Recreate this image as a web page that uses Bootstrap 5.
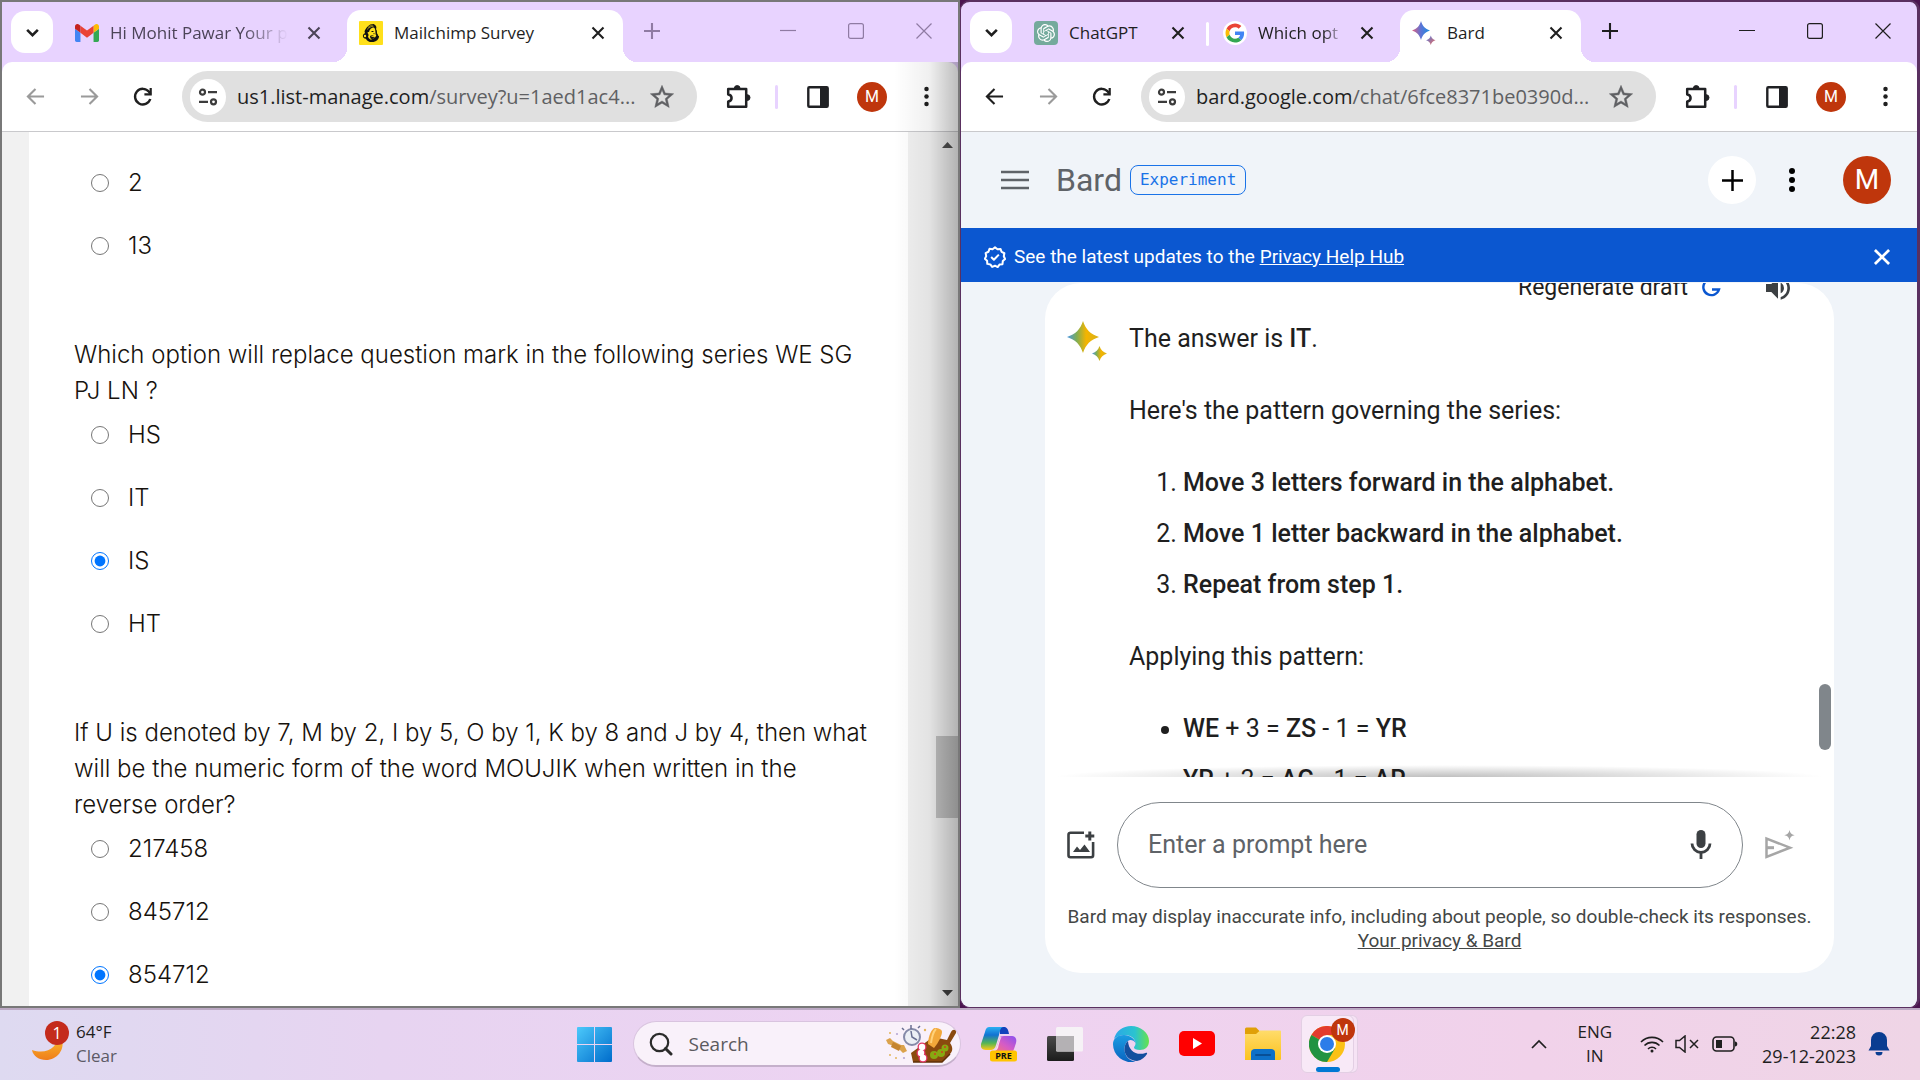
<!DOCTYPE html>
<html lang="en">
<head>
<meta charset="utf-8">
<meta name="viewport" content="width=device-width, initial-scale=1">
<title>Desktop</title>
<link href="https://cdn.jsdelivr.net/npm/bootstrap@5.3.0/dist/css/bootstrap.min.css" rel="stylesheet">
<script src="https://cdn.jsdelivr.net/npm/bootstrap@5.3.0/dist/js/bootstrap.bundle.min.js" defer></script>
<style>
  :root { --ui: "Open Sans", "Noto Sans", sans-serif; --gs: Roboto, "Open Sans", sans-serif; --survey: Inter, Roboto, sans-serif; }
  body { background: #4b1450; font-family: var(--ui); color: #1f1f1f; overflow: hidden; }
  button { color: inherit; }
  svg { display: block; flex: none; }
  .plain { border: 0; background: none; padding: 0; display: flex; align-items: center; justify-content: center; flex: none; }
  .desk { min-height: 0; }

  /* browser windows */
  .win { background: #e8d3ff; min-width: 0; flex: 1 1 0; overflow: hidden; }
  .win-left { border: 2px solid #787878; }
  .win-right { border: 1px solid #5a3060; border-top-width: 2px; border-right-width: 3px; border-radius: 10px; }
  .win-shade::after { content: ""; position: absolute; top: 60px; right: 0; bottom: 0; width: 64px; pointer-events: none; background: linear-gradient(90deg, transparent, rgba(0,0,0,.06) 55%, rgba(0,0,0,.26)); }
  .strip { height: 60px; padding-left: 9px; gap: 8px; flex: none; }
  .tabs-menu { width: 42px; height: 42px; border-radius: 14px; background: #fff; margin: 9px 2px 0 0; }
  .tab { height: 52px; margin-top: 8px; padding: 0 14px 6px 12px; border-radius: 14px 14px 0 0; font-size: 17px; position: relative; gap: 11px; flex: none; }
  .tab-wide { width: 276px; }
  .tab-slim { width: 181px; }
  .tab-on { background: #fff; }
  .tab-on::before, .tab-on::after { content: ""; position: absolute; bottom: 0; width: 14px; height: 14px; }
  .tab-on::before { left: -14px; background: radial-gradient(circle at 0 0, transparent 14px, #fff 14px); }
  .tab-on::after { right: -14px; background: radial-gradient(circle at 100% 0, transparent 14px, #fff 14px); }
  .tab-title { flex: 1 1 0; min-width: 0; overflow: hidden; white-space: nowrap; }
  .tab-fade { -webkit-mask-image: linear-gradient(90deg, #000 75%, transparent); mask-image: linear-gradient(90deg, #000 75%, transparent); }
  .tab-close { width: 22px; }
  .tab-muted { color: #4c4458; }
  .tab-line { width: 3px; height: 24px; background: #fff; border-radius: 2px; margin: 20px -6px 0 -5px; }
  .tab-new { width: 36px; height: 58px; margin-left: 3px; }
  .ctl { gap: 32px; padding-right: 16px; height: 58px; }
  .ctl .plain { width: 36px; height: 58px; }
  .dimmed { color: #8f7ba3; }
  .tools { height: 69px; flex: none; background: #fff; border-radius: 10px 10px 0 0; padding: 0 14px 0 15px; }
  .rnd { width: 36px; height: 36px; }
  .rnd-next { margin-left: 18px; }
  .off { color: #9a9a9a; }
  .omni { height: 51px; border-radius: 26px; background: #e0e0e0; padding: 0 17px 0 8px; min-width: 0; margin: 0 23px 0 21px; }
  .site { width: 36px; height: 36px; border-radius: 50%; background: #fff; }
  .url { font-size: 20px; color: #5f6063; overflow: hidden; white-space: nowrap; padding-left: 11px; flex: 1 1 0; min-width: 0; }
  .url b { font-weight: 400; color: #1f1f1f; }
  .tool-line { width: 3px; height: 24px; background: #e8d3ff; border-radius: 2px; margin: 0 22px 0 19px; }
  .who { width: 30px; height: 30px; border-radius: 50%; background: #bf360c; color: #fff; font: 16px/30px var(--gs); margin: 0 21px; }
  .page { border-top: 1px solid #c9c9cc; min-height: 0; }

  /* survey */
  .survey-bg { background: #f1f1f1; padding-left: 27px; }
  .sheet { background: #fff; padding: 33px 32px 0 45px; min-height: 0; overflow: hidden; font: 300 24px/36px var(--survey); color: #17120d; }
  .sheet fieldset { margin-bottom: 73px; }
  .sheet legend { font-size: 24px; line-height: 36px; margin: 0 0 8px; float: none; }
  .opt { display: flex; align-items: center; gap: 19px; padding-left: 17px; height: 36px; margin-bottom: 27px; }
  .opt:last-child { margin-bottom: 0; }
  .opt input { width: 18px; height: 18px; margin: 0; }
  .bar { width: 22px; margin-left: 28px; padding: 8px 0; flex: none; }
  .bar-thumb { height: 82px; width: 22px; background: #c1c1c1; }
  .sp-a { flex: 586 1 0; } .sp-b { flex: 170 1 0; }

  /* Bard */
  .bard { background: #f0f4f9; font-family: var(--gs); }
  .bard-head { height: 96px; flex: none; padding: 0 26px 0 40px; }
  .bard-name { font: 32px/40px var(--gs); color: #5f6368; margin: 0 8px 0 27px; }
  .exp { font: 16px/28px "DejaVu Sans Mono", monospace; color: #1a73e8; border: 1px solid #1a73e8; border-radius: 8px; padding: 0 9px; }
  .disc { width: 48px; height: 48px; border-radius: 50%; }
  .disc-m { background: #bf360c; color: #fff; font-size: 28px; }
  .more { margin: 0 33px 0 18px; }
  .notice { height: 54px; flex: none; background: #0b57d0; color: #fff; font-size: 19px; padding: 4px 17px 0 23px; }
  .notice a { color: #fff; }
  .chat-card { background: #fff; border-radius: 36px; margin: 1px 83px 34px 84px; min-height: 0; overflow: hidden; position: relative; }
  .log { overflow: hidden; min-height: 0; padding: 0 22px; font-size: 25px; line-height: 36px; }
  .regen { margin: -10px 18px 18px 0; height: 30px; font-size: 23px; line-height: 30px; color: #1f1f1f; }
  .regen-icon { margin: 0 41px 0 13px; }
  .log-mark { margin-right: 22px; }
  .log p { margin-bottom: 36px; }
  .log ol, .log ul { padding-left: 54px; margin-bottom: 36px; }
  .log li { margin-bottom: 15px; }
  .log b { font-weight: 500; }
  .log-thumb { position: absolute; right: 3px; top: 401px; width: 12px; height: 66px; border-radius: 6px; background: #80868b; }
  .log-edge { height: 12px; flex: none; margin: -12px 10px 0; position: relative; background: radial-gradient(ellipse 50% 100% at 50% 100%, rgba(0,0,0,.25), transparent); }
  .ask { padding: 25px 37px 0 22px; flex: none; }
  .ask-pill { height: 86px; border: 1px solid #80868b; border-radius: 43px; margin: 0 20px 0 22px; padding: 0 27px 0 30px; }
  .ask-pill input { border: 0; outline: 0; background: none; min-width: 0; font: 25px/36px var(--gs); padding: 0; }
  .ask-pill input::placeholder { color: #5f6368; opacity: 1; }
  .fine { font-size: 19px; line-height: 24px; color: #444746; text-align: center; padding: 17px 0 20px; flex: none; }
  .fine a { color: #444746; }

  /* taskbar */
  .taskbar { display: grid; grid-template-columns: 1fr auto 1fr; height: 72px; flex: none; border-top: 2px solid #bca9c4; padding: 0 22px 2px 30px; background: linear-gradient(90deg, #dedaf1, #e7d4f1 20%, #eed3f2 50%, #f1d2ea 80%, #efd5e6); font-size: 17px; line-height: 24px; }
  .count { position: absolute; left: 15px; top: -6px; width: 24px; height: 24px; border-radius: 50%; background: #c42b1c; color: #fff; font-size: 16px; text-align: center; }
  .sky { color: #5c5a66; }
  .dock { margin-left: 2px; }
  .finder { width: 328px; height: 46px; border-radius: 23px; background: #f9f1fa; border: 1px solid #d9c4df; border-bottom: 2px solid #c5b0cb; padding: 0 3px 0 15px; margin: 0 20px 0 21px; }
  .finder input { border: 0; outline: 0; background: none; min-width: 0; font: 19px/28px var(--ui); padding: 0 0 0 16px; }
  .finder input::placeholder { color: #5c5a5e; opacity: 1; }
  .apps { gap: 30px; }
  .app-on { width: 53px; height: 58px; border-radius: 6px; background: #f8e9f7; border: 1px solid #e3cfe4; margin-left: -10px; position: relative; box-shadow: 4px 0 0 -1px #f6e3f5, 4px 0 0 0 #e3cfe4; }
  .app-on::after { content: ""; position: absolute; left: 14px; bottom: 0; width: 24px; height: 5px; border-radius: 3px; background: #0078d4; }
  .app-who { position: absolute; left: 29px; top: 2px; width: 24px; height: 24px; border-radius: 50%; background: #bf360c; color: #fff; font: 14px/24px var(--gs); text-align: center; }
  .tray { padding-right: 8px; }
  .lang { margin: 0 28px 0 30px; }
  .clock { margin: 0 12px 0 24px; font-size: 18px; }
</style>
</head>
<body class="vh-100 d-flex flex-column">

<svg width="0" height="0" class="position-absolute" aria-hidden="true">
  <defs>
    <linearGradient id="gBard" x1="0" y1="0" x2="1" y2="0"><stop offset="0" stop-color="#e0607e"/><stop offset=".5" stop-color="#5b74d6"/><stop offset="1" stop-color="#1c8ee0"/></linearGradient>
    <linearGradient id="gBard2" x1="0" y1="0" x2="1" y2="1"><stop offset="0" stop-color="#4f7be0"/><stop offset="1" stop-color="#ee6a5c"/></linearGradient>
    <linearGradient id="gAns" x1="0" y1="0" x2="1" y2="0"><stop offset="0" stop-color="#4a97e8"/><stop offset=".3" stop-color="#7fae55"/><stop offset=".6" stop-color="#f4b400"/><stop offset="1" stop-color="#d8b21c"/></linearGradient>
    <linearGradient id="gWin" x1="0" y1="0" x2="1" y2="1"><stop offset="0" stop-color="#4cc9fb"/><stop offset="1" stop-color="#006ccb"/></linearGradient>
    <linearGradient id="gCopA" x1="0" y1="0" x2="0" y2="1"><stop offset="0" stop-color="#2bb0f2"/><stop offset=".35" stop-color="#1272d2"/><stop offset=".7" stop-color="#55b556"/><stop offset="1" stop-color="#ffc817"/></linearGradient>
    <linearGradient id="gCopB" x1="1" y1="0" x2="0" y2="1"><stop offset="0" stop-color="#8850f0"/><stop offset=".5" stop-color="#d65cc5"/><stop offset="1" stop-color="#ff7b63"/></linearGradient>
    <linearGradient id="gEdgeA" x1="0" y1="0" x2="1" y2="0"><stop offset="0" stop-color="#2aa7e8"/><stop offset=".6" stop-color="#2bc3d0"/><stop offset="1" stop-color="#66e34c"/></linearGradient>
    <linearGradient id="gEdgeB" x1="0" y1="0" x2="0" y2="1"><stop offset="0" stop-color="#1b9de2"/><stop offset="1" stop-color="#0a64c0"/></linearGradient>
    <linearGradient id="gFold" x1="0" y1="0" x2="0" y2="1"><stop offset="0" stop-color="#ffdc6b"/><stop offset="1" stop-color="#fcc21e"/></linearGradient>
    <linearGradient id="gMoon" x1="0" y1="0" x2="0" y2="1"><stop offset="0" stop-color="#fbc02d"/><stop offset="1" stop-color="#ef7d1b"/></linearGradient>
    <linearGradient id="gDark" x1="0" y1="0" x2="0" y2="1"><stop offset="0" stop-color="#4a4a4a"/><stop offset="1" stop-color="#1c1c1c"/></linearGradient>
  </defs>
  <symbol id="i-down" viewBox="0 0 14 14"><path d="M2 4.500l5 5 5-5" fill="none" stroke="currentColor" stroke-width="2.400"/></symbol>
  <symbol id="i-x" viewBox="0 0 14 14"><path d="M1.500 1.500l11 11m0-11l-11 11" fill="none" stroke="currentColor" stroke-width="2.100"/></symbol>
  <symbol id="i-thinx" viewBox="0 0 16 16"><path d="M.5.5l15 15m0-15l-15 15" fill="none" stroke="currentColor" stroke-width="1.200"/></symbol>
  <symbol id="i-plus" viewBox="0 0 16 16"><path d="M8 0v16M0 8h16" fill="none" stroke="currentColor" stroke-width="2.100"/></symbol>
  <symbol id="i-min" viewBox="0 0 16 16"><path d="M0 7.500h16" stroke="currentColor" stroke-width="1.200"/></symbol>
  <symbol id="i-max" viewBox="0 0 16 16"><rect x=".6" y=".6" width="14.800" height="14.800" rx="2" fill="none" stroke="currentColor" stroke-width="1.200"/></symbol>
  <symbol id="i-back" viewBox="0 0 20 20"><path d="M10 2l-8 8 8 8M2 10h17" fill="none" stroke="currentColor" stroke-width="2.200"/></symbol>
  <symbol id="i-fwd" viewBox="0 0 20 20"><path d="M10 2l8 8-8 8M18 10H1" fill="none" stroke="currentColor" stroke-width="2.200"/></symbol>
  <symbol id="i-reload" viewBox="0 0 20 20"><path d="M17.300 12A7.800 7.800 0 1 1 16 4.800L17.500 7" fill="none" stroke="currentColor" stroke-width="2.400"/><path d="M18.800 1v7.400h-7.400V6.200h5.200V1z" fill="currentColor"/></symbol>
  <symbol id="i-tune" viewBox="0 0 20 18"><g fill="none" stroke="#3c3c3c" stroke-width="2.200"><circle cx="4.500" cy="4.200" r="2.500"/><circle cx="15.500" cy="13.800" r="2.500"/><path d="M10 4.200h9M1 13.800h9"/></g></symbol>
  <symbol id="i-star" viewBox="0 0 24 24"><path d="M22 9.240l-7.190-.62L12 2 9.190 8.630 2 9.240l5.460 4.730L5.820 21 12 17.270 18.180 21l-1.630-7.030L22 9.240zM12 15.400l-3.760 2.270 1-4.280-3.320-2.880 4.380-.38L12 6.100l1.710 4.040 4.380.38-3.320 2.880 1 4.280L12 15.400z" fill="#5f6063" stroke="#5f6063" stroke-width=".4"/></symbol>
  <symbol id="i-ext" viewBox="0 0 26 26"><path d="M3.200 5h18v17.800h-18v-5.300c4.500-.6 4.500-6.400 0-7z" fill="none" stroke="#202124" stroke-width="2.500" stroke-linejoin="round"/><path d="M9.300 4.500a2.900 2.900 0 0 1 5.800 0zM21.500 10.700h.6a2.900 2.900 0 0 1 0 5.800h-.6z" fill="#202124" stroke="#202124"/></symbol>
  <symbol id="i-side" viewBox="0 0 22 22"><rect x="1.300" y="1.300" width="19.400" height="19.400" rx="1" fill="none" stroke="#202124" stroke-width="2.400"/><path d="M13 1h8v20h-8z" fill="#202124"/></symbol>
  <symbol id="i-dots" viewBox="0 0 6 24"><g fill="currentColor"><circle cx="3" cy="3" r="2.700"/><circle cx="3" cy="12" r="2.700"/><circle cx="3" cy="21" r="2.700"/></g></symbol>
  <symbol id="i-spark" viewBox="0 0 24 24"><path d="M9 0c1.400 5 4 7.800 9 9.500-5 1.700-7.600 4.500-9 9.500-1.400-5-4-7.800-9-9.500C5 7.800 7.600 5 9 0z" fill="url(#gBard)"/><path d="M18.800 14.500c.8 2.700 2 4 4.700 4.700-2.700.8-4 2-4.700 4.800-.8-2.700-2-4-4.700-4.800 2.700-.7 4-2 4.700-4.700z" fill="url(#gBard2)"/></symbol>
</svg>

<main class="desk d-flex flex-grow-1">
  <!-- Survey window -->
  <section class="win win-left win-shade position-relative d-flex flex-column">
    <div class="strip d-flex align-items-start">
      <button class="plain tabs-menu" aria-label="Search tabs"><svg width="15" height="15"><use href="#i-down"/></svg></button>
      <div class="tab tab-wide tab-muted d-flex align-items-center">
        <svg width="24" height="18" viewBox="52 42 88 66"><path fill="#4285f4" d="M58 108h14V74L52 59v43c0 3.320 2.690 6 6 6"/><path fill="#34a853" d="M120 108h14c3.320 0 6-2.690 6-6V59l-20 15"/><path fill="#fbbc04" d="M120 48v26l20-15v-8c0-7.420-8.470-11.650-14.400-7.200"/><path fill="#ea4335" d="M72 74V48l24 18 24-18v26L96 92"/><path fill="#c5221f" d="M52 51v8l20 15V48l-5.600-4.200c-5.940-4.450-14.400-.22-14.400 7.200"/></svg>
        <span class="tab-title tab-fade me-1">Hi Mohit Pawar Your p</span>
        <button class="plain tab-close" aria-label="Close tab"><svg width="14" height="14"><use href="#i-x"/></svg></button>
      </div>
      <div class="tab tab-wide tab-on d-flex align-items-center">
        <svg width="24" height="24" viewBox="0 0 24 24"><rect width="24" height="24" rx="1" fill="#ffe01b"/><path d="M14.500 3c-3-.8-7.500 3.200-8.800 6.800-.5 1.300.6 2 .2 2.500-1.400.5-2.200 1.500-2 3 .2 1.700 1.700 2.600 3 2.400 1.200 2.800 4.500 3.800 7.600 3.200 3-.5 5-2.600 5.500-5 .2-.9-.5-1.300-1-1.400 0-.7-.3-1.800-1-2 .1-2.700-.4-3.700-1-4.200 1-2 .2-4.500-2.500-5.300z" fill="#111"/><path d="M10 11c.5-2.500 2.500-4.500 4.800-4.500 1.400.8 1.600 3 1.700 5.500 0 1.300.2 2 .8 2.400-1 2.800-3.400 3.400-5.300 2.700 1.800.3 3.600-.2 4.400-1.300-1.600.5-4.200.5-4.400-1.300 1 .8 2 .8 3 .5-1.500-1-3.200-1.200-4 .5.3 2.300 1.500 3.200 2.800 3.500-2.600 0-4.300-1.500-4.800-3.500.8-1 .7-2.500-.5-3.500 0-.6.700-.9 1.500-1z" fill="#ffe01b"/><path d="M9 6.500c1.500-1.400 3-2.300 4.800-2.400M8 8.500c2-2 4-3.200 6.500-3.300" stroke="#ffe01b" stroke-width=".6" fill="none"/><path d="M12.500 10.500h2m.5 1.700v1" stroke="#111" stroke-width="1"/><circle cx="6" cy="15" r="1.200" fill="#ffe01b"/></svg>
        <span class="tab-title">Mailchimp Survey</span>
        <button class="plain tab-close" aria-label="Close tab"><svg width="14" height="14"><use href="#i-x"/></svg></button>
      </div>
      <button class="plain tab-new dimmed" aria-label="New tab"><svg width="16" height="16"><use href="#i-plus"/></svg></button>
      <div class="ctl d-flex ms-auto dimmed">
        <button class="plain" aria-label="Minimise"><svg width="16" height="16"><use href="#i-min"/></svg></button>
        <button class="plain" aria-label="Maximise"><svg width="16" height="16"><use href="#i-max"/></svg></button>
        <button class="plain" aria-label="Close"><svg width="16" height="16"><use href="#i-thinx"/></svg></button>
      </div>
    </div>
    <div class="tools d-flex align-items-center">
      <button class="plain rnd off" aria-label="Back"><svg width="19" height="19"><use href="#i-back"/></svg></button>
      <button class="plain rnd rnd-next off" aria-label="Forward"><svg width="19" height="19"><use href="#i-fwd"/></svg></button>
      <button class="plain rnd rnd-next" aria-label="Reload"><svg width="20" height="20"><use href="#i-reload"/></svg></button>
      <div class="omni d-flex align-items-center flex-grow-1">
        <span class="plain site"><svg width="20" height="18"><use href="#i-tune"/></svg></span>
        <span class="url"><b>us1.list-manage.com</b>/survey?u=1aed1ac4...</span>
        <button class="plain rnd" aria-label="Bookmark"><svg width="28" height="28"><use href="#i-star"/></svg></button>
      </div>
      <button class="plain rnd" aria-label="Extensions"><svg width="26" height="26"><use href="#i-ext"/></svg></button>
      <span class="tool-line"></span>
      <button class="plain rnd" aria-label="Side panel"><svg width="22" height="22"><use href="#i-side"/></svg></button>
      <button class="plain who" aria-label="Profile">M</button>
      <button class="plain rnd" aria-label="Menu"><svg width="5" height="21"><use href="#i-dots"/></svg></button>
    </div>
    <div class="page survey-bg d-flex flex-grow-1">
      <form class="sheet flex-grow-1">
        <fieldset>
          <label class="opt"><input type="radio" name="q1">2</label>
          <label class="opt"><input type="radio" name="q1">13</label>
        </fieldset>
        <fieldset>
          <legend>Which option will replace question mark in the following series WE SG PJ LN ?</legend>
          <label class="opt"><input type="radio" name="q2">HS</label>
          <label class="opt"><input type="radio" name="q2">IT</label>
          <label class="opt"><input type="radio" name="q2" checked>IS</label>
          <label class="opt"><input type="radio" name="q2">HT</label>
        </fieldset>
        <fieldset>
          <legend>If U is denoted by 7, M by 2, I by 5, O by 1, K by 8 and J by 4, then what will be the numeric form of the word MOUJIK when written in the reverse order?</legend>
          <label class="opt"><input type="radio" name="q3">217458</label>
          <label class="opt"><input type="radio" name="q3">845712</label>
          <label class="opt"><input type="radio" name="q3" checked>854712</label>
        </fieldset>
      </form>
      <div class="bar d-flex flex-column align-items-center">
        <svg width="11" height="10" viewBox="0 0 11 10"><path d="M5.500 2L11 8H0z" fill="#505050"/></svg>
        <span class="sp-a"></span><span class="bar-thumb"></span><span class="sp-b"></span>
        <svg width="11" height="10" viewBox="0 0 11 10"><path d="M5.500 8L11 2H0z" fill="#404040"/></svg>
      </div>
    </div>
  </section>

  <!-- Bard window -->
  <section class="win win-right d-flex flex-column">
    <div class="strip d-flex align-items-start">
      <button class="plain tabs-menu" aria-label="Search tabs"><svg width="15" height="15"><use href="#i-down"/></svg></button>
      <div class="tab tab-slim d-flex align-items-center">
        <svg width="24" height="24" viewBox="0 0 24 24"><rect width="24" height="24" rx="4" fill="#74aa9c"/><path transform="translate(3 3) scale(.75)" fill="#fff" d="M22.282 9.821a5.985 5.985 0 0 0-.516-4.910 6.046 6.046 0 0 0-6.510-2.900A6.065 6.065 0 0 0 4.981 4.182a5.985 5.985 0 0 0-3.998 2.900 6.046 6.046 0 0 0 .743 7.097 5.980 5.980 0 0 0 .511 4.911 6.051 6.051 0 0 0 6.515 2.900A5.985 5.985 0 0 0 13.260 24a6.056 6.056 0 0 0 5.772-4.206 5.989 5.989 0 0 0 3.998-2.900 6.056 6.056 0 0 0-.748-7.073zm-9.022 12.608a4.476 4.476 0 0 1-2.876-1.041l.142-.08 4.778-2.758a.795.795 0 0 0 .393-.681v-6.737l2.020 1.169a.071.071 0 0 1 .038.052v5.583a4.504 4.504 0 0 1-4.495 4.494zm-9.661-4.125a4.471 4.471 0 0 1-.535-3.014l.142.085 4.783 2.758a.771.771 0 0 0 .781 0l5.843-3.369v2.332a.08.08 0 0 1-.033.062L9.740 19.950a4.499 4.499 0 0 1-6.141-1.646zM2.341 7.896a4.485 4.485 0 0 1 2.366-1.973V11.600a.766.766 0 0 0 .388.677l5.814 3.354-2.020 1.169a.076.076 0 0 1-.071 0l-4.830-2.787A4.504 4.504 0 0 1 2.341 7.872zm16.596 3.856L13.104 8.364 15.119 7.200a.076.076 0 0 1 .071 0l4.830 2.791a4.494 4.494 0 0 1-.677 8.104v-5.677a.79.79 0 0 0-.406-.666zm2.011-3.023l-.142-.085-4.774-2.782a.776.776 0 0 0-.785 0L9.409 9.230V6.897a.066.066 0 0 1 .028-.061l4.830-2.787a4.499 4.499 0 0 1 6.680 4.660zM8.307 12.863l-2.020-1.164a.08.08 0 0 1-.038-.057V6.074a4.499 4.499 0 0 1 7.376-3.454l-.142.081L8.704 5.459a.795.795 0 0 0-.393.681zm1.098-2.365l2.602-1.500 2.607 1.500v2.999l-2.597 1.500-2.607-1.500z"/></svg>
        <span class="tab-title">ChatGPT</span>
        <button class="plain tab-close" aria-label="Close tab"><svg width="14" height="14"><use href="#i-x"/></svg></button>
      </div>
      <span class="tab-line"></span>
      <div class="tab tab-slim d-flex align-items-center">
        <svg width="24" height="24" viewBox="0 0 24 24"><circle cx="12" cy="12" r="12" fill="#fff"/><g transform="translate(2.500 2.500) scale(.396)"><path fill="#EA4335" d="M24 9.500c3.540 0 6.710 1.220 9.210 3.600l6.850-6.850C35.900 2.380 30.470 0 24 0 14.620 0 6.510 5.380 2.560 13.220l7.980 6.190C12.430 13.720 17.740 9.500 24 9.500z"/><path fill="#4285F4" d="M46.980 24.550c0-1.570-.15-3.090-.38-4.550H24v9.020h12.940c-.58 2.960-2.260 5.480-4.780 7.180l7.730 6c4.510-4.180 7.090-10.360 7.090-17.650z"/><path fill="#FBBC05" d="M10.530 28.590c-.48-1.450-.76-2.990-.76-4.590s.27-3.140.76-4.590l-7.980-6.190C.92 16.460 0 20.120 0 24c0 3.880.92 7.540 2.560 10.780l7.970-6.190z"/><path fill="#34A853" d="M24 48c6.480 0 11.930-2.130 15.890-5.810l-7.730-6c-2.150 1.450-4.920 2.300-8.160 2.300-6.260 0-11.570-4.220-13.470-9.910l-7.980 6.190C6.510 42.620 14.620 48 24 48z"/></g></svg>
        <span class="tab-title tab-fade">Which opt</span>
        <button class="plain tab-close" aria-label="Close tab"><svg width="14" height="14"><use href="#i-x"/></svg></button>
      </div>
      <div class="tab tab-slim tab-on d-flex align-items-center">
        <svg width="24" height="24"><use href="#i-spark"/></svg>
        <span class="tab-title">Bard</span>
        <button class="plain tab-close" aria-label="Close tab"><svg width="14" height="14"><use href="#i-x"/></svg></button>
      </div>
      <button class="plain tab-new" aria-label="New tab"><svg width="16" height="16"><use href="#i-plus"/></svg></button>
      <div class="ctl d-flex ms-auto">
        <button class="plain" aria-label="Minimise"><svg width="16" height="16"><use href="#i-min"/></svg></button>
        <button class="plain" aria-label="Maximise"><svg width="16" height="16"><use href="#i-max"/></svg></button>
        <button class="plain" aria-label="Close"><svg width="16" height="16"><use href="#i-thinx"/></svg></button>
      </div>
    </div>
    <div class="tools d-flex align-items-center">
      <button class="plain rnd" aria-label="Back"><svg width="19" height="19"><use href="#i-back"/></svg></button>
      <button class="plain rnd rnd-next off" aria-label="Forward"><svg width="19" height="19"><use href="#i-fwd"/></svg></button>
      <button class="plain rnd rnd-next" aria-label="Reload"><svg width="20" height="20"><use href="#i-reload"/></svg></button>
      <div class="omni d-flex align-items-center flex-grow-1">
        <span class="plain site"><svg width="20" height="18"><use href="#i-tune"/></svg></span>
        <span class="url"><b>bard.google.com</b>/chat/6fce8371be0390d...</span>
        <button class="plain rnd" aria-label="Bookmark"><svg width="28" height="28"><use href="#i-star"/></svg></button>
      </div>
      <button class="plain rnd" aria-label="Extensions"><svg width="26" height="26"><use href="#i-ext"/></svg></button>
      <span class="tool-line"></span>
      <button class="plain rnd" aria-label="Side panel"><svg width="22" height="22"><use href="#i-side"/></svg></button>
      <button class="plain who" aria-label="Profile">M</button>
      <button class="plain rnd" aria-label="Menu"><svg width="5" height="21"><use href="#i-dots"/></svg></button>
    </div>
    <div class="page bard d-flex flex-column flex-grow-1">
      <header class="bard-head d-flex align-items-center">
        <button class="plain" aria-label="Main menu"><svg width="28" height="20" viewBox="0 0 28 20"><path d="M0 2h28M0 10h28M0 18h28" stroke="#5f6368" stroke-width="2.600"/></svg></button>
        <span class="bard-name">Bard</span><span class="exp">Experiment</span>
        <button class="plain disc bg-white ms-auto text-black" aria-label="New chat"><svg width="21" height="21" viewBox="0 0 16 16"><path d="M8 0v16M0 8h16" stroke="currentColor" stroke-width="1.900"/></svg></button>
        <button class="plain rnd more text-black" aria-label="More"><svg width="6" height="24" viewBox="0 0 6 24"><circle cx="3" cy="3" r="3"/><circle cx="3" cy="12" r="3"/><circle cx="3" cy="21" r="3"/></svg></button>
        <button class="plain disc disc-m" aria-label="Account">M</button>
      </header>
      <div class="notice d-flex align-items-center">
        <svg class="me-2" width="22" height="22" viewBox="0 0 24 24" fill="none" stroke="#fff" stroke-width="2.200" stroke-linejoin="round"><path d="M12 1.500l2.700 2 3.300-.300 1.200 3.200 3 1.500-.600 3.300 1.400 3-2.500 2.200-.3 3.400-3.300.500-2 2.700-2.900-1.500-3.100 1.300-2-2.700-3.300-.600-.200-3.300L.9 14l1.500-3-.6-3.200 3-1.500 1.200-3.200 3.300.400z"/><path d="M7.800 12l3 3 5.400-5.600"/></svg>
        <span>See the latest updates to the <a href="#">Privacy Help Hub</a></span>
        <button class="plain ms-auto rnd" aria-label="Dismiss"><svg width="18" height="18"><use href="#i-x"/></svg></button>
      </div>
      <div class="chat-card d-flex flex-column flex-grow-1">
        <div class="log flex-grow-1">
          <div class="regen d-flex align-items-center justify-content-end">
            <span>Regenerate draft</span>
            <svg class="regen-icon" width="20" height="22" viewBox="0 0 20 22"><path d="M16.500 5A8 8 0 1 0 18 12.500h-7" fill="none" stroke="#0b57d0" stroke-width="2.400"/></svg>
            <svg width="32" height="32" viewBox="0 0 24 24" fill="#3c4043"><path d="M3 9v6h4l5 5V4L7 9H3zm13.500 3A4.500 4.500 0 0 0 14 7.970v8.050c1.480-.730 2.500-2.250 2.500-4.020zM14 3.230v2.060c2.890.860 5 3.540 5 6.710s-2.110 5.850-5 6.710v2.060c4.010-.910 7-4.490 7-8.770s-2.990-7.860-7-8.770z"/></svg>
          </div>
          <div class="d-flex align-items-start">
            <svg class="log-mark" width="40" height="40" viewBox="0 0 40 40"><path d="M16 0c2.800 8.500 7.500 13.200 16 16-8.500 2.800-13.200 7.500-16 16-2.800-8.500-7.500-13.200-16-16C8.500 13.200 13.200 8.500 16 0z" fill="url(#gAns)"/><path d="M32.500 25c1.400 4 3.500 6.100 7.500 7.500-4 1.400-6.100 3.500-7.500 7.500-1.400-4-3.500-6.100-7.500-7.500 4-1.400 6.100-3.500 7.500-7.500z" fill="url(#gAns)"/></svg>
            <div>
              <p>The answer is <b>IT</b>.</p>
              <p>Here's the pattern governing the series:</p>
              <ol><li><b>Move 3 letters forward in the alphabet.</b></li><li><b>Move 1 letter backward in the alphabet.</b></li><li><b>Repeat from step 1.</b></li></ol>
              <p>Applying this pattern:</p>
              <ul><li><b>WE</b> + 3 = <b>ZS</b> - 1 = <b>YR</b></li><li><b>YR</b> + 3 = <b>AG</b> - 1 = <b>AR</b></li></ul>
            </div>
          </div>
        </div>
        <span class="log-thumb"></span>
        <div class="log-edge"></div>
        <form class="ask d-flex align-items-center">
          <button type="button" class="plain" aria-label="Upload image"><svg width="28" height="28" viewBox="0 0 28 28"><path d="M17 1.700H3.500a2 2 0 0 0-2 2v20.600a2 2 0 0 0 2 2h20.600a2 2 0 0 0 2-2V11" fill="none" stroke="#3c4043" stroke-width="2.600"/><path d="M22.800.5v9M18.300 5h9" stroke="#3c4043" stroke-width="3"/><path d="M6 21l4-5.500 3 3.500 4.500-5.500L23 21z" fill="#3c4043"/></svg></button>
          <div class="ask-pill d-flex align-items-center flex-grow-1">
            <input class="flex-grow-1" type="text" placeholder="Enter a prompt here" aria-label="Prompt">
            <button type="button" class="plain" aria-label="Microphone"><svg width="28" height="30" viewBox="0 0 28 30"><rect x="9.500" y="0" width="9" height="18" rx="4.500" fill="#3c4043"/><path d="M5 13.500a9 9 0 0 0 18 0M14 22v7" fill="none" stroke="#3c4043" stroke-width="2.800"/></svg></button>
          </div>
          <button type="button" class="plain" aria-label="Send"><svg width="34" height="30" viewBox="0 0 34 30"><path d="M3.500 8.500v18.500L27 17.700z" fill="none" stroke="#a6a6a6" stroke-width="2.500"/><path d="M4 17.700h7" stroke="#a6a6a6" stroke-width="3"/><path d="M26.500 0c.6 3.300 1.900 4.600 5.200 5.200-3.300.6-4.600 1.900-5.200 5.200-.6-3.300-1.900-4.600-5.200-5.200 3.300-.6 4.600-1.900 5.200-5.200z" fill="#a6a6a6"/></svg></button>
        </form>
        <div class="fine">Bard may display inaccurate info, including about people, so double-check its responses.<br><a href="#">Your privacy &amp; Bard</a></div>
      </div>
    </div>
  </section>
</main>

<footer class="taskbar">
  <div class="d-flex align-items-center">
    <div class="position-relative me-2"><svg width="38" height="34" viewBox="0 0 38 34"><path d="M27 8c2 12-10 20-25 15 1 6 7 10 14 10 11 0 19-10 16-21-1-3-3-4-5-4z" fill="url(#gMoon)"/></svg><span class="count">1</span></div>
    <div>64°F<br><span class="sky">Clear</span></div>
  </div>
  <div class="dock d-flex align-items-center">
    <button class="plain" aria-label="Start"><svg width="35" height="35" viewBox="0 0 35 35"><path fill="url(#gWin)" d="M1 0h16v17H0V1a1 1 0 0 1 1-1zM18 0h16a1 1 0 0 1 1 1v16H18zM0 18h17v17H1a1 1 0 0 1-1-1zM18 18h17v16a1 1 0 0 1-1 1H18z"/></svg></button>
    <div class="finder d-flex align-items-center">
      <svg width="24" height="24" viewBox="0 0 24 24"><circle cx="10.500" cy="10.500" r="8.700" fill="none" stroke="#2b2b2b" stroke-width="2.200"/><path d="M16.500 16.500l5.500 5.500" stroke="#2b2b2b" stroke-width="3" stroke-linecap="round"/></svg>
      <input class="flex-grow-1" type="text" placeholder="Search" aria-label="Search">
      <svg width="72" height="38" viewBox="0 0 72 38">
        <path d="M26 28L48 12l14 3 4-8c2-4 6-2 5 1l-6 10c3 4 3 8 0 11l-8 8H28z" fill="#8a4a0e"/><path d="M28 37h29l8-8" fill="none" stroke="#5f3008" stroke-width="1.500"/>
        <path d="M43 19c0-8 4-16 7-16s7 1 7 4-3 10-8 16z" fill="#f2a83a"/><path d="M46 18c1-7 3-12 5-14" stroke="#ffd27a" stroke-width="2" fill="none"/>
        <g fill="#e03462"><circle cx="37" cy="22" r="4.500"/><circle cx="36" cy="28" r="4.500"/><circle cx="38" cy="33" r="4.500"/></g><g fill="#fff"><circle cx="37" cy="22" r="3.200"/><circle cx="36" cy="28" r="3.200"/><circle cx="38" cy="33" r="3.200"/></g>
        <g fill="#88a812"><circle cx="49" cy="30" r="4"/><circle cx="56" cy="28" r="4"/><circle cx="60" cy="23" r="3.500"/></g><g fill="#d33a22"><circle cx="50" cy="29" r="1"/><circle cx="57" cy="27" r="1"/><circle cx="60" cy="22" r="1"/></g>
        <path d="M1 15l4-2 3 3 8 4 3 0 3 6-4 2-3-3-9-5-3-1z" fill="#dba24c"/><path d="M8 17l8 4-2 5-8-4z" fill="#c4842f"/>
        <circle cx="27" cy="12" r="8" fill="#eceff5" stroke="#858aa8" stroke-width="2"/><path d="M26 0v4M17 3l2 2m14-2l2-2M26 6l1 6 5 3" stroke="#696f91" stroke-width="1.500" fill="none"/>
        <g fill="#e2b45c"><circle cx="5" cy="8" r="1"/><circle cx="40" cy="5" r="1.200"/><circle cx="11" cy="33" r="1"/><circle cx="5" cy="30" r="1"/></g><g fill="#b7a8d4"><circle cx="12" cy="9" r="1.100"/><circle cx="19" cy="33" r="1.100"/></g>
      </svg>
    </div>
    <div class="apps d-flex align-items-center">
      <button class="plain" aria-label="Copilot"><svg width="36" height="36" viewBox="0 0 36 36"><path d="M18 1h5c3 0 4 2 5 7h-9z" fill="#1243bd"/><path d="M9 1h13c-3 1-3 4-4 8l-3 10c-1 4-3 5-6 5H5c-4 0-6-3-5-6l4-12c1-4 2-5 5-5z" fill="url(#gCopA)"/><path d="M21 10h10c4 0 5 4 4 7l-2 6c-1 3-3 4-6 4H10c4 0 5-3 6-7l2-6c1-2 1-4 3-4z" fill="url(#gCopB)"/><path d="M16 20l2-6c1-3 2-4 5-4h-2c-2 3-3 8-4 12-1 2-2 3-4 3 2-1 2-3 3-5z" fill="#f8dff0"/><rect x="9" y="24.500" width="27" height="11" rx="2.500" fill="#ffc400"/><text x="22.500" y="33" font-family="Open Sans, sans-serif" font-weight="700" font-size="9" text-anchor="middle" fill="#111">PRE</text></svg></button>
      <button class="plain" aria-label="Task view"><svg width="36" height="36" viewBox="0 0 36 36"><rect x="0" y="10" width="27" height="25" rx="1.500" fill="url(#gDark)"/><rect x="9" y="1" width="27" height="24.500" rx="1.500" fill="#f6f2f6"/><path d="M9 10h18v15.500H10.500A1.500 1.500 0 0 1 9 24z" fill="#b4b1b4"/></svg></button>
      <button class="plain" aria-label="Edge"><svg width="36" height="36" viewBox="0 0 36 36"><path d="M1 13C3 5 10 0 18 0c10 0 18 7 18 15 0 6-4 9-9 9-4 0-6-1-6-2.500 0-1 1.500-1.700 1.500-4C22.500 13 18 9 12 9 7 9 3 11 1 13z" fill="url(#gEdgeA)"/><path d="M0 18c0-5 4-9 11-9 6 0 11 4 11.500 8-1-2-3-3-5-3-3 0-6 4-6 9 0 7 5 12 11 12.500A18 18 0 0 1 0 18z" fill="url(#gEdgeB)"/><path d="M15 15c-6 5-5 19 9 20 5-1 8-4 10-7 .5-1-.5-1.500-1.500-1-9 3-17-2-17.500-12z" fill="#134f9e"/></svg></button>
      <button class="plain" aria-label="YouTube"><svg width="36" height="26" viewBox="0 0 36 26"><rect width="36" height="25" rx="5" fill="#f00"/><path d="M14 7l9 5.500-9 5.500z" fill="#fff"/></svg></button>
      <button class="plain" aria-label="File Explorer"><svg width="36" height="34" viewBox="0 0 36 34"><path d="M0 2a1.500 1.500 0 0 1 1.500-1.500H11l4 4h19.500V10H0z" fill="#e0a008"/><path d="M0 7h11l4-3.500h20a1 1 0 0 1 1 1V32a1 1 0 0 1-1 1H0z" fill="url(#gFold)"/><path d="M6 33v-7c0-3 1.500-4 4-4h16c2.500 0 4 1 4 4v7z" fill="#0d70c8"/><rect x="10" y="27" width="16" height="2" rx="1" fill="#084f96"/></svg></button>
      <button class="plain app-on" aria-label="Chrome"><svg width="36" height="36" viewBox="0 0 36 36"><circle cx="18" cy="18" r="18" fill="#fbc116"/><path d="M18 18L2.400 9A18 18 0 0 1 33.600 9z" fill="#e33b2e"/><path d="M2.400 9A18 18 0 0 0 18 36l8-13.500L18 18z" fill="#229342"/><path d="M18 9h15.600L26 22.500z" fill="#fbc116"/><circle cx="18" cy="18" r="9" fill="#fff"/><circle cx="18" cy="18" r="7" fill="#2b7de9"/></svg><span class="app-who">M</span></button>
    </div>
  </div>
  <div class="tray d-flex align-items-center justify-content-end">
    <svg width="16" height="10" viewBox="0 0 16 10"><path d="M1 9l7-7 7 7" fill="none" stroke="#1f1f1f" stroke-width="1.700"/></svg>
    <div class="lang text-center">ENG<br>IN</div>
    <svg width="24" height="18" viewBox="0 0 24 18" fill="none" stroke="#1f1f1f" stroke-width="1.600"><path d="M1 7a15.500 15.500 0 0 1 22 0M4.500 10.500a10.600 10.600 0 0 1 15 0M8 14a5.600 5.600 0 0 1 8 0"/><circle cx="12" cy="16" r="1.500" fill="#1f1f1f" stroke="none"/></svg>
    <svg class="mx-2" width="28" height="18" viewBox="0 0 28 18" fill="none" stroke="#1f1f1f" stroke-width="1.500"><path d="M4 5.500h3.500L13 1v16l-5.500-4.500H4zM18 5l8 8m0-8l-8 8"/></svg>
    <svg class="ms-1" width="26" height="16" viewBox="0 0 26 16"><rect x="1" y="1" width="21" height="14" rx="3.500" fill="none" stroke="#1f1f1f" stroke-width="1.600"/><rect x="4" y="4" width="6" height="8" fill="#1f1f1f"/><path d="M23 5.500c3 0 3 5 0 5z" fill="#1f1f1f"/></svg>
    <div class="clock text-end">22:28<br>29-12-2023</div>
    <svg width="22" height="24" viewBox="0 0 22 24"><path d="M11 0a8 8 0 0 1 8 8v6l2.500 4.500H.5L3 14V8a8 8 0 0 1 8-8zM7.500 20h7a3.500 3.500 0 0 1-7 0z" fill="#0a3d91"/></svg>
  </div>
</footer>
</body>
</html>
